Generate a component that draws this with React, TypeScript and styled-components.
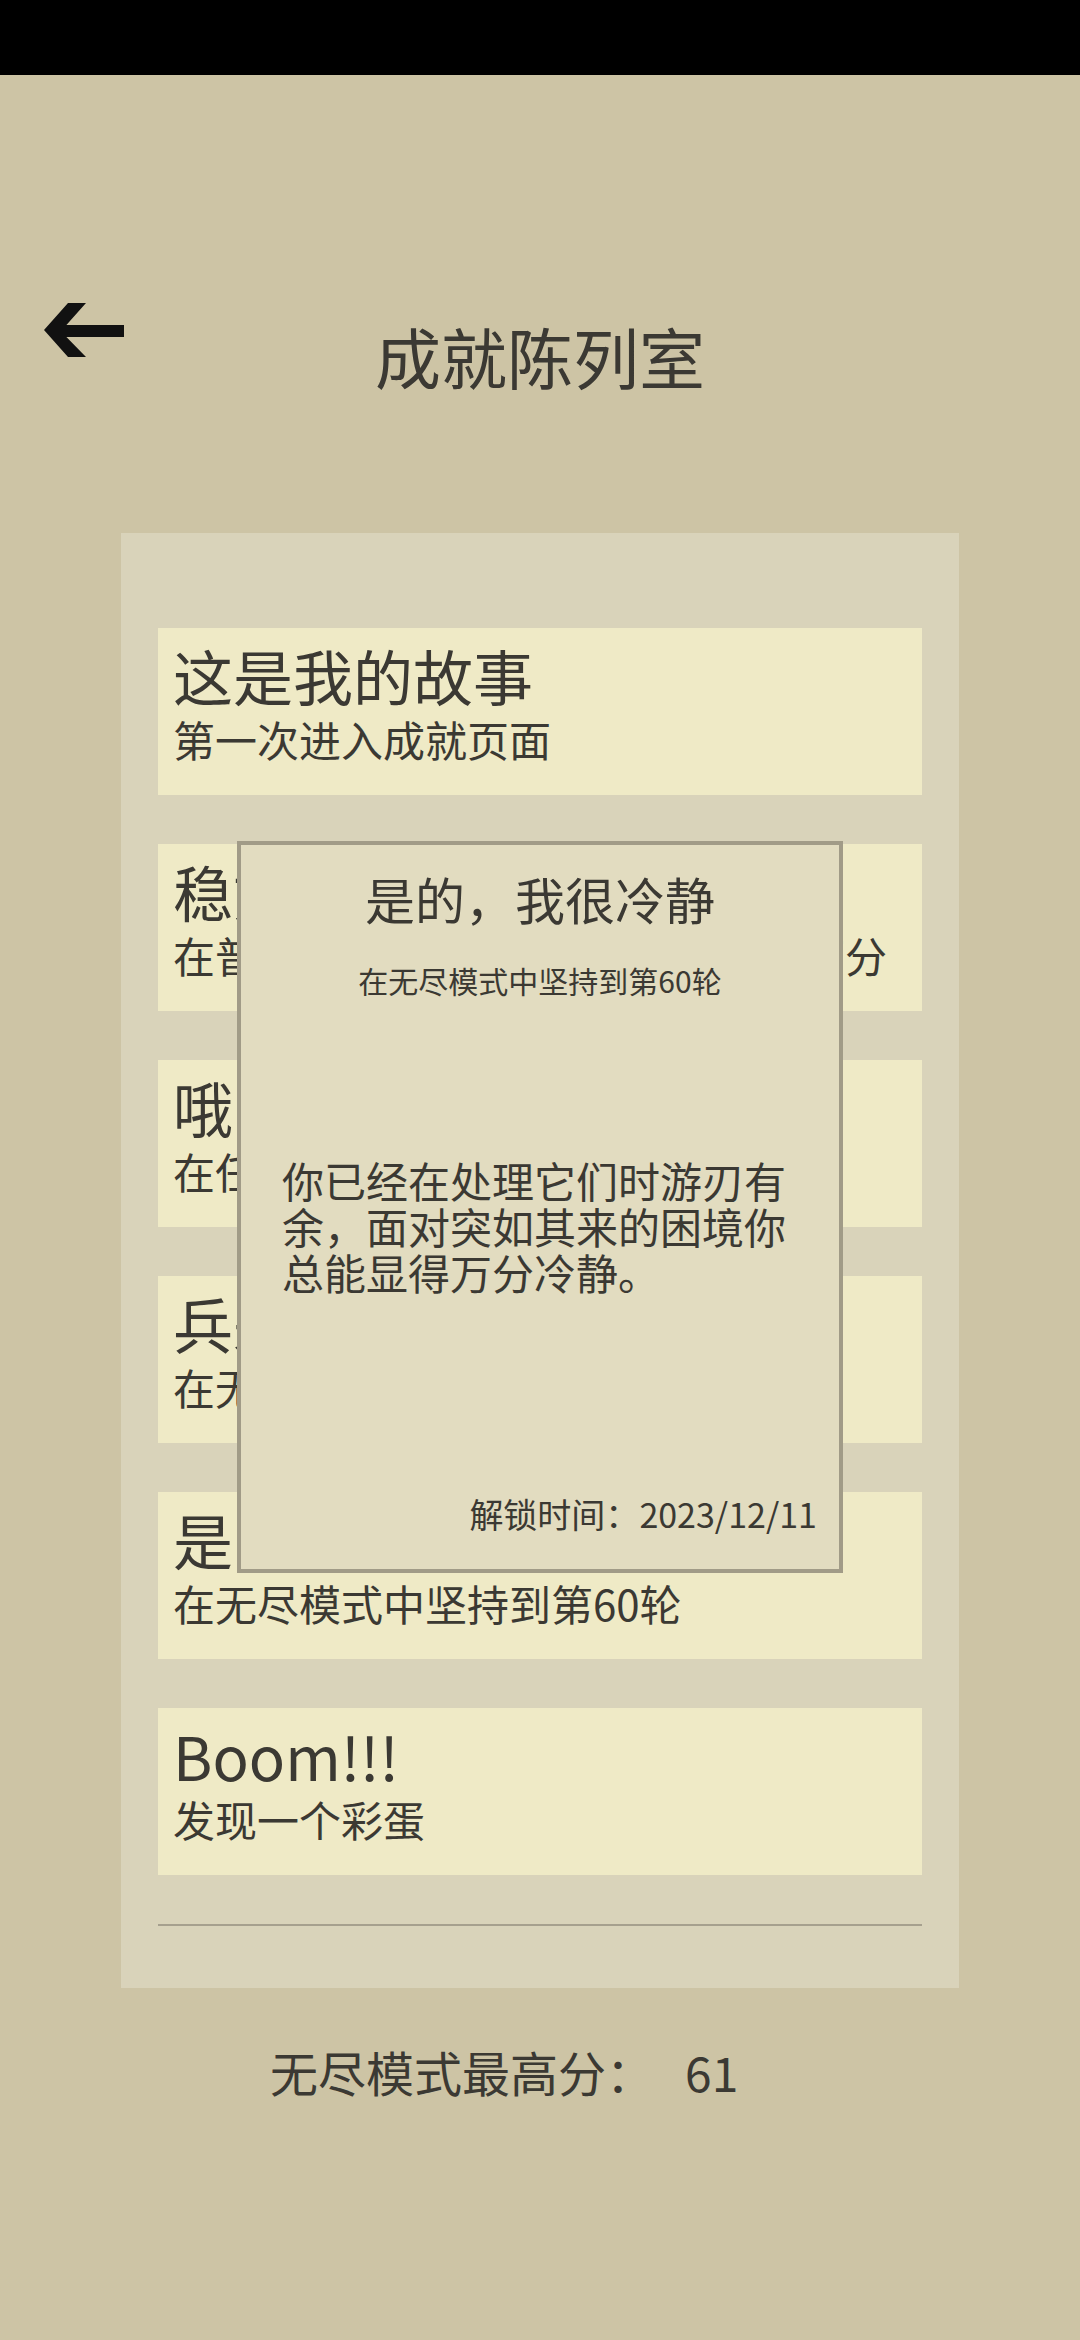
import React from 'react'
import styled, { createGlobalStyle } from 'styled-components'

interface Achievement {
  id: string
  title: string
  desc: string
}

const achievements: Achievement[] = [
  { id: 'story', title: '这是我的故事', desc: '第一次进入成就页面' },
  { id: 'steady', title: '稳如泰山', desc: '在普通模式中一次性获得了超过一万分' },
  { id: 'oh', title: '哦，是吗', desc: '在任意模式中失败一次' },
  { id: 'guard', title: '兵来将挡', desc: '在无尽模式中坚持到第30轮' },
  { id: 'calm', title: '是的，我很冷静', desc: '在无尽模式中坚持到第60轮' },
  { id: 'boom', title: 'Boom!!!', desc: '发现一个彩蛋' },
]

const selected = {
  title: '是的，我很冷静',
  desc: '在无尽模式中坚持到第60轮',
  story: '你已经在处理它们时游刃有余，面对突如其来的困境你总能显得万分冷静。',
  unlockedAt: '2023/12/11',
}

export default function App () {
  return (
    <>
      <GlobalStyle />
      <Screen>
        <StatusBar />
        <Header>
          <BackButton aria-label="返回">
            <svg width="80" height="54" viewBox="0 0 80 54">
              <polygon
                points="0,27 24,0 42,0 22.4,22 80,22 80,34 22.4,34 42,54 24,54"
                fill="#111"
              />
            </svg>
          </BackButton>
          <Title>成就陈列室</Title>
        </Header>

        <Shelf>
          <CardList>
            { achievements.map(item => (
              <Card key={item.id}>
                <CardTitle>{ item.title }</CardTitle>
                <CardDesc>{ item.desc }</CardDesc>
              </Card>
            )) }
          </CardList>
          <Divider />
        </Shelf>

        <BestScore>
          <ScoreLabel>无尽模式最高分：</ScoreLabel>
          <ScoreValue>61</ScoreValue>
        </BestScore>

        <Dialog>
          <DialogTitle>{ selected.title }</DialogTitle>
          <DialogDesc>{ selected.desc }</DialogDesc>
          <DialogStory>{ selected.story }</DialogStory>
          <DialogDate>解锁时间：{ selected.unlockedAt }</DialogDate>
        </Dialog>
      </Screen>
    </>
  )
}

const GlobalStyle = createGlobalStyle`
  html, body {
    margin: 0;
    padding: 0;
    background: #cdc4a5;
  }

  body {
    font-family: "Noto Sans CJK SC", "Noto Sans", sans-serif;
    color: #3b3933;
  }
`

const Screen = styled.div`
  position: relative;
  min-height: 2340px;
  background: #cdc4a5;
`

const StatusBar = styled.div`
  height: 75px;
  background: #000;
`

const Header = styled.header`
  display: grid;
  grid-template-columns: 1fr auto 1fr;
  align-items: start;
  box-sizing: border-box;
  height: 458px;
  padding-top: 228px;
`

const BackButton = styled.button`
  justify-self: start;
  display: flex;
  margin: 0 0 0 44px;
  padding: 0;
  border: none;
  background: none;
  cursor: pointer;
`

const Title = styled.h1`
  margin: 19px 0 0;
  font-size: 66px;
  font-weight: 400;
  line-height: 1;
  color: #3b3933;
`

const Shelf = styled.section`
  margin: 0 121px;
  padding: 95px 37px 62px;
  background: #d9d3ba;
`

const CardList = styled.div`
  display: flex;
  flex-direction: column;
  gap: 49px;
`

const Card = styled.div`
  box-sizing: border-box;
  height: 167px;
  padding: 11px 15px;
  background: #efeac6;
`

const CardTitle = styled.div`
  font-size: 60px;
  line-height: 71px;
`

const CardDesc = styled.div`
  margin-top: 4px;
  font-size: 42px;
  line-height: 50px;
  white-space: nowrap;
`

const Divider = styled.hr`
  margin: 49px 0 0;
  height: 2px;
  border: none;
  background: #a6a08e;
`

const BestScore = styled.div`
  display: flex;
  justify-content: center;
  margin-top: 55px;
  font-size: 48px;
  line-height: 1.2;
`

const ScoreLabel = styled.span``

const ScoreValue = styled.span`
  box-sizing: border-box;
  min-width: 156px;
  padding-left: 31px;
`

const Dialog = styled.div`
  position: absolute;
  top: 841px;
  left: 50%;
  transform: translateX(-50%);
  display: flex;
  flex-direction: column;
  box-sizing: border-box;
  width: 606px;
  height: 732px;
  padding: 23px 22px 35px;
  border: 4px solid #a19b87;
  background: #e2dcc0;
`

const DialogTitle = styled.div`
  font-size: 50px;
  line-height: 60px;
  text-align: center;
`

const DialogDesc = styled.div`
  margin-top: 34px;
  font-size: 30px;
  line-height: 36px;
  text-align: center;
`

const DialogStory = styled.p`
  margin: 159px 0 0 19px;
  font-size: 42px;
  line-height: 46px;
`

const DialogDate = styled.div`
  margin-top: auto;
  font-size: 34px;
  line-height: 41px;
  text-align: right;
`
